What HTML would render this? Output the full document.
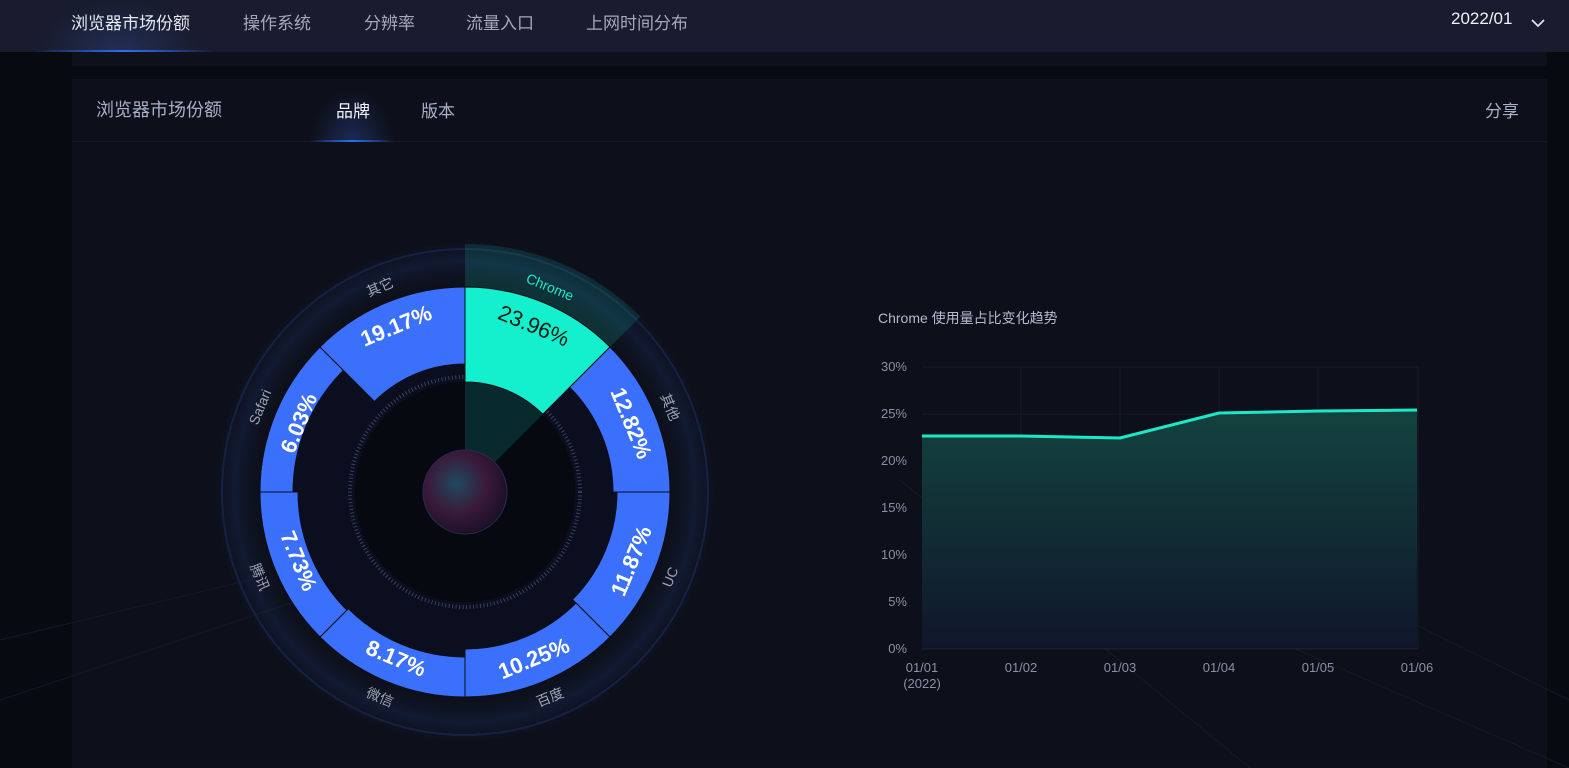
<!DOCTYPE html>
<html><head><meta charset="utf-8"><style>
*{margin:0;padding:0;box-sizing:border-box}
body{width:1569px;height:768px;overflow:hidden;background:#080a11;font-family:"Liberation Sans","Noto Sans CJK SC",sans-serif;position:relative}
.nav{position:absolute;left:0;top:0;width:1569px;height:52px;background:#181c2e}
.nav span{position:absolute;top:9px;font-size:17px;color:#a4a8ba}
.nav .act{color:#e6e8f0}
.strip{position:absolute;left:72px;top:52px;width:1475px;height:14px;background:#0e111b}
.panel{position:absolute;left:72px;top:79px;width:1475px;height:689px;background:#0d101a}
.ph{position:absolute;left:0;top:0;width:100%;height:63px;border-bottom:1px solid #161a27}
</style></head><body>
<div class="nav">
<div style="position:absolute;left:40px;top:0;width:160px;height:52px;background:radial-gradient(ellipse at 50% 100%,rgba(50,80,160,.35),transparent 70%)"></div>
<div style="position:absolute;left:35px;top:50px;width:180px;height:2px;background:linear-gradient(90deg,transparent,#2f6df0,transparent)"></div>
<span class="act" style="left:71px">浏览器市场份额</span>
<span style="left:243px">操作系统</span>
<span style="left:364px">分辨率</span>
<span style="left:466px">流量入口</span>
<span style="left:586px">上网时间分布</span>
<span class="act" style="left:1451px;font-size:17px;color:#f0f2f8">2022/01</span>
<svg style="position:absolute;left:1530px;top:17px" width="16" height="12"><path d="M2 3 L8 9 L14 3" stroke="#e0e2ea" stroke-width="1.8" fill="none"/></svg>
</div>
<div class="strip"></div>
<div class="panel">
<div class="ph">
<span style="position:absolute;left:24px;top:17px;font-size:18px;color:#a9afc6">浏览器市场份额</span>
<div style="position:absolute;left:238px;top:10px;width:84px;height:53px;background:radial-gradient(ellipse at 50% 100%,rgba(50,80,170,.4),transparent 70%)"></div>
<div style="position:absolute;left:238px;top:61px;width:84px;height:2px;background:linear-gradient(90deg,transparent,#2f6df0,transparent)"></div>
<span style="position:absolute;left:264px;top:18px;font-size:17px;color:#f0f2f8">品牌</span>
<span style="position:absolute;left:349px;top:18px;font-size:17px;color:#a9afc6">版本</span>
<span style="position:absolute;left:1413px;top:18px;font-size:17px;color:#a9afc6">分享</span>
</div>
</div>
<svg style="position:absolute;left:0;top:0" width="1569" height="768">
<defs>
<radialGradient id="glow" cx="465" cy="492" r="250" gradientUnits="userSpaceOnUse">
<stop offset="0.8" stop-color="#0d101a" stop-opacity="0"/><stop offset="0.92" stop-color="#1a2d60" stop-opacity=".35"/><stop offset="1" stop-color="#1a2d60" stop-opacity="0"/></radialGradient>
<radialGradient id="ball" cx="0.4" cy="0.4" r="0.7"><stop offset="0" stop-color="#1f4a60"/><stop offset="0.5" stop-color="#3a1a3a"/><stop offset="1" stop-color="#120d22"/></radialGradient>
<linearGradient id="area" x1="0" y1="0" x2="0" y2="1"><stop offset="0" stop-color="#12433f"/><stop offset="1" stop-color="#10162a"/></linearGradient>
<radialGradient id="wedge" cx="465" cy="492" r="250" gradientUnits="userSpaceOnUse"><stop offset="0.3" stop-color="#14e8c8" stop-opacity=".25"/><stop offset="1" stop-color="#14e8c8" stop-opacity=".12"/></radialGradient>
</defs>
<g stroke="#161a28" stroke-width="1.2" opacity=".8">
<line x1="0" y1="700" x2="300" y2="600"/><line x1="0" y1="640" x2="250" y2="580"/><line x1="1100" y1="470" x2="1569" y2="700"/><line x1="900" y1="480" x2="1250" y2="768"/><line x1="1000" y1="520" x2="1569" y2="768"/>
</g>
<circle cx="465" cy="492" r="250" fill="url(#glow)"/>
<circle cx="465" cy="492" r="243" fill="none" stroke="#1a2c5a" stroke-width="2" opacity=".6"/>
<circle cx="465" cy="492" r="205" fill="#0a0e1e"/>
<path d="M465 492 L465 244 A248 248 0 0 1 640.4 316.6 Z" fill="url(#wedge)"/>
<circle cx="465" cy="492" r="115" fill="none" stroke="#3a4060" stroke-width="4" stroke-dasharray="1 2.5"/>
<circle cx="465" cy="492" r="110" fill="#070911"/>
<path d="M465 492 L465 380 A112 112 0 0 1 544 413 Z" fill="#14e8c8" opacity=".15"/>
<circle cx="465" cy="492" r="42" fill="url(#ball)" stroke="#2a2a50"/>
<g stroke="#0b0e18" stroke-width="1">
<path d="M465 287 A205 205 0 0 1 610 347 L542.8 414.2 A110 110 0 0 0 465 382 Z" fill="#14efcd"/>
<path d="M610 347 A205 205 0 0 1 670 492 L613 492 A148 148 0 0 0 569.7 387.3 Z" fill="#3a70fc"/>
<path d="M670 492 A205 205 0 0 1 610 637 L572.5 599.5 A152 152 0 0 0 617 492 Z" fill="#3a70fc"/>
<path d="M610 637 A205 205 0 0 1 465 697 L465 649 A157 157 0 0 0 576 603 Z" fill="#3a70fc"/>
<path d="M465 697 A205 205 0 0 1 320 637 L348.3 608.7 A165 165 0 0 0 465 657 Z" fill="#3a70fc"/>
<path d="M320 637 A205 205 0 0 1 260 492 L298 492 A167 167 0 0 0 346.9 610.1 Z" fill="#3a70fc"/>
<path d="M260 492 A205 205 0 0 1 320 347 L343.4 370.4 A172 172 0 0 0 293 492 Z" fill="#3a70fc"/>
<path d="M320 347 A205 205 0 0 1 465 287 L465 364 A128 128 0 0 0 374.5 401.5 Z" fill="#3a70fc"/>
</g>
<g font-size="22" text-anchor="middle" dominant-baseline="central" fill="#fff" font-weight="bold">
<text transform="translate(533.9 325.7) rotate(22.5)" fill="#0a1a18" font-weight="normal">23.96%</text>
<text transform="translate(631.3 423.1) rotate(67.5)">12.82%</text>
<text transform="translate(631.3 560.9) rotate(-67.5)">11.87%</text>
<text transform="translate(533.9 658.3) rotate(-22.5)">10.25%</text>
<text transform="translate(396.1 658.3) rotate(22.5)">8.17%</text>
<text transform="translate(298.7 560.9) rotate(67.5)">7.73%</text>
<text transform="translate(298.7 423.1) rotate(-67.5)">6.03%</text>
<text transform="translate(396.1 325.7) rotate(-22.5)">19.17%</text>
</g>
<g font-size="14" text-anchor="middle" dominant-baseline="central" fill="#9ea3b6">
<text transform="translate(550 286.9) rotate(22.5)" fill="#1de8c6">Chrome</text>
<text transform="translate(670.1 407) rotate(67.5)">其他</text>
<text transform="translate(670.1 577) rotate(-67.5)">UC</text>
<text transform="translate(550 697.1) rotate(-22.5)">百度</text>
<text transform="translate(380 697.1) rotate(22.5)">微信</text>
<text transform="translate(259.9 577) rotate(67.5)">腾讯</text>
<text transform="translate(259.9 407) rotate(-67.5)">Safari</text>
<text transform="translate(380 286.9) rotate(-22.5)">其它</text>
</g>
<text x="878" y="323" font-size="14" fill="#b4b9d0">Chrome 使用量占比变化趋势</text>
<g stroke="#171c2b" stroke-width="1">
<line x1="922" y1="367" x2="1418" y2="367"/><line x1="922" y1="414" x2="1418" y2="414"/><line x1="922" y1="461" x2="1418" y2="461"/><line x1="922" y1="508" x2="1418" y2="508"/><line x1="922" y1="555" x2="1418" y2="555"/><line x1="922" y1="602" x2="1418" y2="602"/>
<line x1="1021" y1="367" x2="1021" y2="649"/><line x1="1120" y1="367" x2="1120" y2="649"/><line x1="1219" y1="367" x2="1219" y2="649"/><line x1="1318" y1="367" x2="1318" y2="649"/><line x1="1418" y1="367" x2="1418" y2="649"/>
</g>
<path d="M922 436 L1021 436 L1120 438 L1219 413 L1318 411 L1417 410 L1417 649 L922 649 Z" fill="url(#area)"/>
<path d="M922 436 L1021 436 L1120 438 L1219 413 L1318 411 L1417 410" fill="none" stroke="#1de8c6" stroke-width="3"/>
<line x1="922" y1="649" x2="1418" y2="649" stroke="#1f2435"/>
<g font-size="13" fill="#8a8fa3" text-anchor="end">
<text x="907" y="371">30%</text><text x="907" y="418">25%</text><text x="907" y="465">20%</text><text x="907" y="512">15%</text><text x="907" y="559">10%</text><text x="907" y="606">5%</text><text x="907" y="653">0%</text>
</g>
<g font-size="13" fill="#8a8fa3" text-anchor="middle">
<text x="922" y="672">01/01</text><text x="922" y="688">(2022)</text><text x="1021" y="672">01/02</text><text x="1120" y="672">01/03</text><text x="1219" y="672">01/04</text><text x="1318" y="672">01/05</text><text x="1417" y="672">01/06</text>
</g>
</svg>
</body></html>
